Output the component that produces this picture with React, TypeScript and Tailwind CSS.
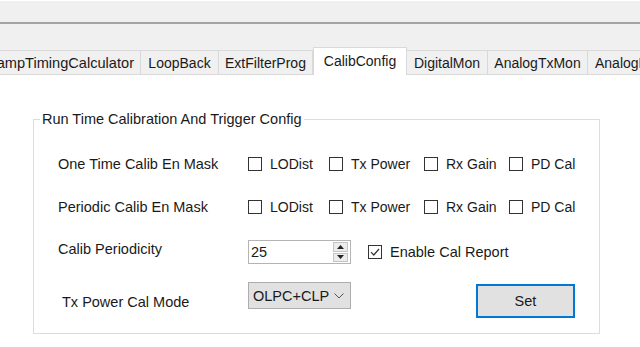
const tabs = [
  { label: 'RampTimingCalculator', w: 'w-[141px] justify-end pr-[6px] text-[14.6px]' },
  { label: 'LoopBack', w: 'w-[78px] justify-center' },
  { label: 'ExtFilterProg', w: 'w-[94px] justify-center' },
  { label: 'CalibConfig', w: 'w-[94px] justify-center', active: true },
  { label: 'DigitalMon', w: 'w-[81px] justify-center' },
  { label: 'AnalogTxMon', w: 'w-[100px] justify-center' },
  { label: 'AnalogRxMon', w: 'w-[100px] justify-start pl-[7px]' },
]

const maskItems = [
  { label: 'LODist', w: 'w-[81px]' },
  { label: 'Tx Power', w: 'w-[95px]' },
  { label: 'Rx Gain', w: 'w-[85px]' },
  { label: 'PD Cal', w: 'w-[70px]' },
]

const CheckBox = ({ label, checked = false, className = '' }: { label: string; checked?: boolean; className?: string }) => (
  <label className={`flex shrink-0 items-center gap-[8px] ${className}`}>
    <span className="flex h-[14px] w-[14px] shrink-0 items-center justify-center border border-[#333333] bg-white">
      {checked && (
        <svg width="12" height="12" viewBox="0 0 12 12">
          <polyline points="2,6.2 4.8,9 10,3" fill="none" stroke="#333333" strokeWidth="1.2" />
        </svg>
      )}
    </span>
    <span className="whitespace-nowrap">{label}</span>
  </label>
)

const MaskRow = ({ label, className = '' }: { label: string; className?: string }) => (
  <div className={`flex h-[24px] items-center ${className}`}>
    <span className="w-[190px] shrink-0 whitespace-nowrap text-[14.5px]">{label}</span>
    {maskItems.map((m) => (
      <CheckBox key={m.label} label={m.label} className={m.w} />
    ))}
  </div>
)

export default function App() {
  return (
    <div
      className="h-[347px] w-[640px] overflow-hidden bg-white text-[14px] leading-[16px] text-[#1a1a1a]"
      style={{ fontFamily: '"Liberation Sans", Arial, sans-serif' }}
    >
      <div className="h-[22px] border-t border-t-white bg-[#f0f0f0]" />
      <div className="h-[2px] bg-[#a3a3a3]" />

      <div className="flex h-[51px] items-end overflow-hidden bg-[#f0f0f0]">
        {tabs.map((t) =>
          t.active ? (
            <div
              key={t.label}
              className={`flex h-[28px] shrink-0 items-center overflow-hidden border border-b-0 border-[#d9d9d9] bg-white pb-[1px] ${t.w}`}
            >
              <span className="whitespace-nowrap">{t.label}</span>
            </div>
          ) : (
            <div
              key={t.label}
              className={`flex h-[25px] shrink-0 items-center overflow-hidden border border-l-0 border-[#d9d9d9] bg-[#f0f0f0] ${t.w}`}
            >
              <span className="whitespace-nowrap">{t.label}</span>
            </div>
          ),
        )}
      </div>

      <fieldset className="ml-[33px] mt-[36px] h-[223px] w-[567px] border border-[#dcdcdc]">
        <legend className="ml-[6px] px-[2px] text-[14.5px]">Run Time Calibration And Trigger Config</legend>

        <div className="flex flex-col pl-[24px]">
          <MaskRow label="One Time Calib En Mask" className="mt-[25px]" />
          <MaskRow label="Periodic Calib En Mask" className="mt-[19px]" />

          <div className="mt-[21px] flex h-[24px] items-start">
            <span className="w-[190px] shrink-0 pt-[1px] text-[14.5px]">Calib Periodicity</span>
            <div className="flex h-[24px] w-[103px] shrink-0 items-center border border-[#b4b4b4] bg-white pl-[2px] pr-[2px]">
              <span className="flex-1 text-[14.5px]">25</span>
              <div className="flex h-[20px] w-[15px] flex-col gap-[1px]">
                <span className="flex flex-1 items-center justify-center border border-[#c4c4c4] bg-[#ececec]">
                  <svg width="7" height="4" viewBox="0 0 7 4">
                    <polygon points="0,4 3.5,0 7,4" fill="#222" />
                  </svg>
                </span>
                <span className="flex flex-1 items-center justify-center border border-[#c4c4c4] bg-[#ececec]">
                  <svg width="7" height="4" viewBox="0 0 7 4">
                    <polygon points="0,0 7,0 3.5,4" fill="#222" />
                  </svg>
                </span>
              </div>
            </div>
            <CheckBox label="Enable Cal Report" checked className="ml-[17px] h-[24px] text-[14.5px]" />
          </div>

          <div className="mt-[18px] flex h-[36px] items-start">
            <span className="w-[190px] shrink-0 pl-[4px] pt-[12px] text-[14.5px]">Tx Power Cal Mode</span>
            <div className="flex h-[27px] w-[103px] shrink-0 items-center justify-between border border-[#adadad] bg-[#e1e1e1] pl-[4px] pr-[6px]">
              <span className="text-[14.5px]">OLPC+CLP</span>
              <svg width="10" height="6" viewBox="0 0 10 6">
                <polyline points="0.5,0.5 5,5 9.5,0.5" fill="none" stroke="#555555" strokeWidth="1" />
              </svg>
            </div>
            <button
              type="button"
              className="ml-[125px] mt-[2px] h-[34px] w-[99px] shrink-0 border-2 border-[#0078d7] bg-[#e1e1e1] text-[14.5px]"
            >
              Set
            </button>
          </div>
        </div>
      </fieldset>
    </div>
  )
}
